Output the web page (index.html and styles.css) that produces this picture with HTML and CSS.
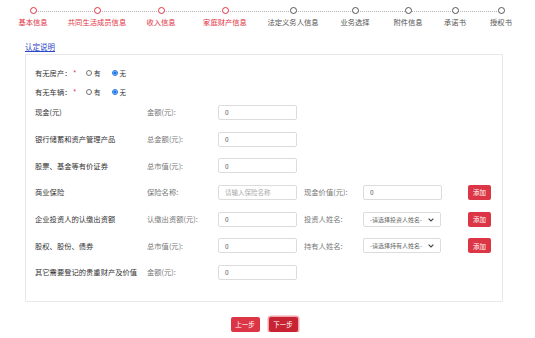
FILE: index.html
```html
<!DOCTYPE html>
<html lang="zh">
<head>
    <meta charset="utf-8">
    <link rel="stylesheet" href="styles.css">
</head>
<body>

    <div class="steps">
        <div class="step done"><span class="dot"></span><span class="step-name">基本信息</span></div>
        <div class="step done"><span class="dot"></span><span class="step-name">共同生活成员信息</span></div>
        <div class="step done"><span class="dot"></span><span class="step-name">收入信息</span></div>
        <div class="step done"><span class="dot"></span><span class="step-name">家庭财产信息</span></div>
        <div class="step"><span class="dot"></span><span class="step-name">法定义务人信息</span></div>
        <div class="step"><span class="dot"></span><span class="step-name">业务选择</span></div>
        <div class="step"><span class="dot"></span><span class="step-name">附件信息</span></div>
        <div class="step"><span class="dot"></span><span class="step-name">承诺书</span></div>
        <div class="step"><span class="dot"></span><span class="step-name">授权书</span></div>
    </div>

    <a class="note" href="#">认定说明</a>

    <div class="panel">
        <div class="yn-row">
            <span class="yn-label">有无房产：</span><span class="star">*</span>
            <label class="opt"><input type="radio" name="house">有</label>
            <label class="opt"><input type="radio" name="house" checked>无</label>
        </div>
        <div class="yn-row">
            <span class="yn-label">有无车辆：</span><span class="star">*</span>
            <label class="opt"><input type="radio" name="car">有</label>
            <label class="opt"><input type="radio" name="car" checked>无</label>
        </div>

        <div class="asset-list">
            <div class="asset-row">
                <span class="asset-name">现金(元)</span>
                <span class="field-label">金额(元):</span>
                <input class="field" value="0">
            </div>
            <div class="asset-row">
                <span class="asset-name">银行储蓄和资产管理产品</span>
                <span class="field-label">总金额(元):</span>
                <input class="field" value="0">
            </div>
            <div class="asset-row">
                <span class="asset-name">股票、基金等有价证券</span>
                <span class="field-label">总市值(元):</span>
                <input class="field" value="0">
            </div>
            <div class="asset-row">
                <span class="asset-name">商业保险</span>
                <span class="field-label">保险名称:</span>
                <input class="field" placeholder="请输入保险名称">
                <span class="field-label">现金价值(元):</span>
                <input class="field" value="0">
                <button class="btn-add">添加</button>
            </div>
            <div class="asset-row">
                <span class="asset-name">企业投资人的认缴出资额</span>
                <span class="field-label">认缴出资额(元):</span>
                <input class="field" value="0">
                <span class="field-label">投资人姓名:</span>
                <span class="pick-wrap">
                    <select class="field pick"><option>-请选择投资人姓名-</option></select>
                    <svg class="chev" width="6" height="4" viewBox="0 0 6 4"><path d="M0.6 0.6 L3 3 L5.4 0.6" fill="none" stroke="#444" stroke-width="1.1"/></svg>
                </span>
                <button class="btn-add">添加</button>
            </div>
            <div class="asset-row">
                <span class="asset-name">股权、股份、债券</span>
                <span class="field-label">总市值(元):</span>
                <input class="field" value="0">
                <span class="field-label">持有人姓名:</span>
                <span class="pick-wrap">
                    <select class="field pick"><option>-请选择持有人姓名-</option></select>
                    <svg class="chev" width="6" height="4" viewBox="0 0 6 4"><path d="M0.6 0.6 L3 3 L5.4 0.6" fill="none" stroke="#444" stroke-width="1.1"/></svg>
                </span>
                <button class="btn-add">添加</button>
            </div>
            <div class="asset-row">
                <span class="asset-name">其它需要登记的贵重财产及价值</span>
                <span class="field-label">金额(元):</span>
                <input class="field" value="0">
            </div>
        </div>
    </div>

    <div class="actions">
        <button class="btn">上一步</button>
        <button class="btn active">下一步</button>
    </div>

</body>
</html>
```

FILE: styles.css
```css
html, body{
    margin:0px;
    background:#fff;
    font-family: "Noto Sans CJK SC", "Noto Sans", sans-serif;
    font-size: 7.3px;
    color:#333;
}

/* stepper */
.steps{
    position:relative;
    display:grid;
    grid-template-columns: 64px 64px 64px 64px 72px 52px 54px 40px 52px;
    padding-left:1px;
    padding-top:7px;
}
.steps::before{
    content:"";
    position:absolute;
    top:11px;
    left:33px;
    width:468px;
    border-top:1px dotted #b5b5b5;
}
.step{
    display:flex;
    flex-direction:column;
    align-items:center;
    color:#555;
}
.dot{
    position:relative;
    width:7px;
    height:7px;
    box-sizing:border-box;
    border:1.3px solid #555;
    border-radius:50%;
    background:#fff;
}
.step-name{
    margin-top:3px;
    line-height:10px;
    white-space:nowrap;
}
.step.done{
    color:#e2323f;
}
.step.done .dot{
    border-color:#e2323f;
}

.note{
    display:inline-block;
    margin:15px 0 0 25px;
    line-height:10px;
    color:#2c46c8;
    font-size:7.5px;
}

/* panel */
.panel{
    width:478px;
    box-sizing:border-box;
    margin:2px 0 0 25px;
    border:1px solid #e8e8e8;
    padding:10px 0 15px 9px;
}
.yn-row{
    display:flex;
    align-items:center;
    height:16px;
    margin-bottom:3px;
    color:#333;
}
.yn-label{
    width:38px;
}
.star{
    color:#e2323f;
    width:13px;
}
.opt{
    display:flex;
    align-items:center;
    margin-right:11px;
    font-size:6.5px;
}
.opt input{
    width:6px;
    height:6px;
    margin:0 2px 0 0;
    accent-color:#1a73e8;
}

.asset-list{
    margin-top:-4px;
}
.asset-row{
    display:grid;
    grid-template-columns: 112px 71px 86px 59px 105px 23px;
    align-items:center;
    height:26.7px;
}
.asset-name{
    color:#333;
    white-space:nowrap;
}
.field-label{
    color:#777;
    white-space:nowrap;
}
.field{
    width:79px;
    height:15px;
    box-sizing:border-box;
    border:1px solid #dcdcdc;
    border-radius:2px;
    padding:0 6px;
    font-family:inherit;
    font-size:6.5px;
    color:#555;
    background:#fff;
}
.field::placeholder{
    color:#aaa;
}
.pick-wrap{
    position:relative;
    width:78px;
    height:15px;
}
.pick{
    width:78px;
    appearance:none;
    padding:0 10px 0 6px;
    font-size:6px;
    color:#666;
}
.chev{
    position:absolute;
    right:7px;
    top:6px;
    pointer-events:none;
}
.btn-add{
    width:23px;
    height:15px;
    border:none;
    border-radius:2px;
    background:#dc3545;
    color:#fff;
    font-family:inherit;
    font-size:6.5px;
    padding:0;
}

/* bottom buttons */
.actions{
    display:flex;
    justify-content:center;
    gap:9px;
    margin-top:15px;
    padding-right:7px;
}
.btn{
    width:29px;
    height:15px;
    border:none;
    border-radius:2px;
    background:#dc3545;
    color:#fff;
    font-family:inherit;
    font-size:6.5px;
    padding:0;
}
.btn.active{
    background:#c82333;
    box-shadow:0 0 0 1.5px #f2a8b0;
}
```
